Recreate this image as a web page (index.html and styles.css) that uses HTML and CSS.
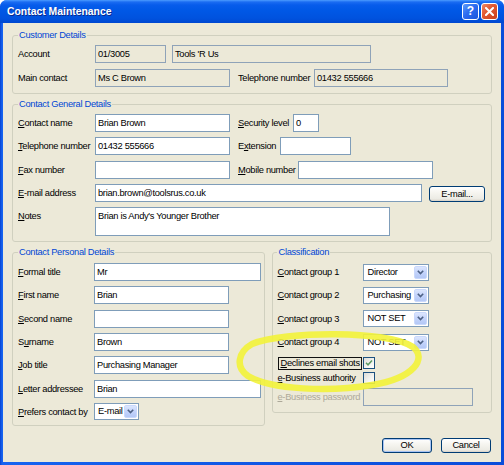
FILE: index.html
```html
<!DOCTYPE html>
<html>
<head>
<meta charset="utf-8">
<title>Contact Maintenance</title>
<link rel="stylesheet" href="styles.css">
</head>
<body>
<div class="window">
  <div class="titlebar">
    <span class="title">Contact Maintenance</span>
    <span class="tbtn help">?</span>
    <span class="tbtn close"><svg width="9" height="9" viewBox="0 0 9 9"><path d="M1 1L8 8M8 1L1 8" stroke="#fff" stroke-width="2" stroke-linecap="square"/></svg></span>
  </div>
  <div class="client">
    <fieldset class="group customer">
      <legend>Customer Details</legend>
      <div class="rows gap6">
        <div class="row">
          <span class="lbl w77">Account</span>
          <span class="box ro w71">01/3005</span>
          <span class="box ro w199 ml6">Tools 'R Us</span>
        </div>
        <div class="row">
          <span class="lbl w77">Main contact</span>
          <span class="box ro w135">Ms C Brown</span>
          <span class="lbl w76 ml8">Telephone number</span>
          <span class="box ro w134">01432 555666</span>
        </div>
      </div>
    </fieldset>

    <fieldset class="group general">
      <legend>Contact General Details</legend>
      <div class="rows gap53">
        <div class="row">
          <span class="lbl w77"><u>C</u>ontact name</span>
          <span class="box w135">Brian Brown</span>
          <span class="lbl w55 ml8"><u>S</u>ecurity level</span>
          <span class="box w26">0</span>
        </div>
        <div class="row">
          <span class="lbl w77"><u>T</u>elephone number</span>
          <span class="box w135">01432 555666</span>
          <span class="lbl w42 ml8">E<u>x</u>tension</span>
          <span class="box w71"></span>
        </div>
        <div class="row">
          <span class="lbl w77"><u>F</u>ax number</span>
          <span class="box w135"></span>
          <span class="lbl w60 ml8"><u>M</u>obile number</span>
          <span class="box w135"></span>
        </div>
        <div class="row">
          <span class="lbl w77"><u>E</u>-mail address</span>
          <span class="box w327">brian.brown@toolsrus.co.uk</span>
          <span class="btn email ml7">E-mail...</span>
        </div>
        <div class="row top">
          <span class="lbl w77 notes-lbl"><u>N</u>otes</span>
          <span class="box w295 notes">Brian is Andy's Younger Brother</span>
        </div>
      </div>
    </fieldset>

    <div class="lower">
      <fieldset class="group personal">
        <legend>Contact Personal Details</legend>
        <div class="rows gap53">
          <div class="row">
            <span class="lbl w76"><u>F</u>ormal title</span>
            <span class="box w167">Mr</span>
          </div>
          <div class="row">
            <span class="lbl w76"><u>F</u>irst name</span>
            <span class="box w135">Brian</span>
          </div>
          <div class="row">
            <span class="lbl w76"><u>S</u>econd name</span>
            <span class="box w135"></span>
          </div>
          <div class="row">
            <span class="lbl w76">S<u>u</u>rname</span>
            <span class="box w135">Brown</span>
          </div>
          <div class="row">
            <span class="lbl w76"><u>J</u>ob title</span>
            <span class="box w135">Purchasing Manager</span>
          </div>
          <div class="row">
            <span class="lbl w76"><u>L</u>etter addressee</span>
            <span class="box w167">Brian</span>
          </div>
          <div class="row">
            <span class="lbl w76"><u>P</u>refers contact by</span>
            <span class="combo w45"><span class="val">E-mail</span><span class="dd"><svg width="7" height="5" viewBox="0 0 7 5"><path d="M0.8 0.8L3.5 3.6L6.2 0.8" fill="none" stroke="#4D6185" stroke-width="1.6"/></svg></span></span>
          </div>
        </div>
      </fieldset>

      <fieldset class="group classif">
        <legend>Classification</legend>
        <div class="rows gap53">
          <div class="row">
            <span class="lbl w86"><u>C</u>ontact group 1</span>
            <span class="combo w66"><span class="val">Director</span><span class="dd"><svg width="7" height="5" viewBox="0 0 7 5"><path d="M0.8 0.8L3.5 3.6L6.2 0.8" fill="none" stroke="#4D6185" stroke-width="1.6"/></svg></span></span>
          </div>
          <div class="row">
            <span class="lbl w86"><u>C</u>ontact group 2</span>
            <span class="combo w66"><span class="val">Purchasing</span><span class="dd"><svg width="7" height="5" viewBox="0 0 7 5"><path d="M0.8 0.8L3.5 3.6L6.2 0.8" fill="none" stroke="#4D6185" stroke-width="1.6"/></svg></span></span>
          </div>
          <div class="row">
            <span class="lbl w86"><u>C</u>ontact group 3</span>
            <span class="combo w66"><span class="val">NOT SET</span><span class="dd"><svg width="7" height="5" viewBox="0 0 7 5"><path d="M0.8 0.8L3.5 3.6L6.2 0.8" fill="none" stroke="#4D6185" stroke-width="1.6"/></svg></span></span>
          </div>
          <div class="row">
            <span class="lbl w86"><u>C</u>ontact group 4</span>
            <span class="combo w66"><span class="val">NOT SET</span><span class="dd"><svg width="7" height="5" viewBox="0 0 7 5"><path d="M0.8 0.8L3.5 3.6L6.2 0.8" fill="none" stroke="#4D6185" stroke-width="1.6"/></svg></span></span>
          </div>
        </div>
        <div class="row chk-row first-chk">
          <span class="lbl w86"><span class="focus"><u>D</u>eclines email shots</span></span>
          <span class="check on"><svg width="8" height="8" viewBox="0 0 8 8"><path d="M1 3.8L3 5.8L7 1.5" fill="none" stroke="#5C9A62" stroke-width="1.5"/></svg></span>
        </div>
        <div class="row chk-row">
          <span class="lbl w86"><u>e</u>-Business authority</span>
          <span class="check"></span>
        </div>
        <div class="row pw-row">
          <span class="lbl w86 disabled"><u>e</u>-Business password</span>
          <span class="box ro w110"></span>
        </div>
      </fieldset>
    </div>

    <div class="buttons">
      <span class="btn default">OK</span>
      <span class="btn">Cancel</span>
    </div>
  </div>

  <svg class="highlight" width="504" height="465" viewBox="0 0 504 465">
    <path d="M252 344 C 285 331, 388 330, 413 347 C 427 358, 415 378, 372 385 C 330 392, 272 390, 248 376 C 235 367, 238 352, 252 344 Z" fill="none" stroke="#F3F33A" stroke-width="6.5" stroke-linecap="round" stroke-linejoin="round"/>
  </svg>
</div>
</body>
</html>
```

FILE: styles.css
```css
* { box-sizing: border-box; }
html, body { margin: 0; padding: 0; }
body {
  width: 504px;
  height: 465px;
  overflow: hidden;
  background: #ffffff;
  font-family: "Liberation Sans", Arial, sans-serif;
  font-size: 9.3px;
  letter-spacing: -0.3px;
  color: #000;
}
u { text-decoration: underline; text-underline-offset: 1px; }

.window {
  position: relative;
  width: 504px;
  height: 465px;
  display: flex;
  flex-direction: column;
  background: linear-gradient(to right, #0842D0 0, #1663F0 2px, #0A4DDA 100%);
  border-radius: 7px 7px 0 0;
  overflow: hidden;
}

.titlebar {
  flex: none;
  height: 23px;
  display: flex;
  align-items: center;
  padding: 0 6px 1px 7px;
  background: linear-gradient(to bottom, #4C9CFF 0, #1B6CF2 2px, #075CEB 5px, #0058E6 45%, #0052DE 80%, #0048D0 100%);
}
.title {
  flex: 1;
  color: #fff;
  font-weight: bold;
  font-size: 10.4px;
  letter-spacing: 0;
  text-shadow: 1px 1px 0 #0A2A8C;
}
.tbtn {
  width: 17px;
  height: 17px;
  border: 1px solid #fff;
  border-radius: 3px;
  display: flex;
  align-items: center;
  justify-content: center;
  color: #fff;
  font-weight: bold;
  font-size: 12px;
  letter-spacing: 0;
}
.tbtn.help {
  background: linear-gradient(135deg, #5E9BFA 0, #2D6CF0 45%, #1A54DC 100%);
  margin-right: 2px;
}
.tbtn.close {
  background: linear-gradient(135deg, #EE8A66 0, #E25A33 40%, #C8401D 100%);
}

.client {
  flex: 1;
  margin: 0 3px 3px;
  background: #ECE9D8;
  padding: 6px 9px 0;
  display: flex;
  flex-direction: column;
}

.group {
  margin: 0;
  border: 1px solid #D0D0BF;
  border-radius: 3px;
  min-width: 0;
}
.group legend {
  color: #0046D5;
  line-height: 12px;
  padding: 0 1px;
  margin-left: 0;
}
.customer { padding: 4px 0 6px 5px; }
.general { margin-top: 4px; padding: 4px 0 5px 5px; }
.lower {
  margin-top: 4px;
  display: flex;
  align-items: flex-start;
  gap: 7px;
}
.personal { width: 254px; padding: 5px 0 4px 5px; }
.classif { width: 220px; padding: 5px 0 6px 4px; }

.rows { display: flex; flex-direction: column; }
.gap6 { gap: 6px; }
.gap53 { gap: 5.3px; }

.row { display: flex; align-items: center; height: 18px; }
.row.top { align-items: flex-start; height: auto; }

.lbl { flex: none; line-height: 18px; white-space: nowrap; }
.lbl.disabled { color: #ACA899; }
.notes-lbl { line-height: 13px; padding-top: 3px; }

.box {
  flex: none;
  height: 18px;
  border: 1px solid #7F9DB9;
  background: #fff;
  padding: 0 2px;
  line-height: 16px;
  white-space: nowrap;
  overflow: hidden;
}
.box.ro { background: #ECE9D8; border-color: #8FA3B8; }
.box.notes { height: 29px; line-height: 14px; padding-top: 1px; }

.combo {
  flex: none;
  height: 17px;
  border: 1px solid #7F9DB9;
  background: #fff;
  display: flex;
  align-items: stretch;
  padding: 1px;
}
.combo .val { flex: 1; padding-left: 2px; line-height: 13px; white-space: nowrap; overflow: hidden; }
.combo .dd {
  flex: none;
  width: 13px;
  border-radius: 2px;
  background: linear-gradient(to bottom, #DCE6FD 0, #C3D3FB 50%, #B4C8F6 100%);
  border: 1px solid #C9D8FC;
  display: flex;
  align-items: center;
  justify-content: center;
}

.chk-row { height: 13px; }
.first-chk { margin-top: 5.2px; }
.chk-row + .chk-row { margin-top: 2px; }
.pw-row { margin-top: 4px; }

.focus {
  display: inline-block;
  border: 1px solid #111;
  line-height: 11px;
  padding: 0 1px;
  margin-left: 1px;
}
.check {
  flex: none;
  width: 12px;
  height: 12px;
  border: 1px solid #1C5180;
  background: linear-gradient(135deg, #DCDCD7 0, #F4F4F1 60%, #fff 100%);
  display: flex;
  align-items: center;
  justify-content: center;
}

.btn {
  flex: none;
  display: flex;
  align-items: center;
  justify-content: center;
  border: 1px solid #003C74;
  border-radius: 3px;
  background: linear-gradient(to bottom, #FFFFFF 0, #F6F5F0 40%, #ECEBE4 85%, #D6D0C5 100%);
}
.btn.email { width: 56px; height: 16px; margin-top: 2px; }

.buttons {
  margin-top: 12px;
  margin-right: 1px;
  display: flex;
  justify-content: flex-end;
  gap: 9px;
}
.buttons .btn { width: 50px; height: 15px; }
.btn.default { box-shadow: inset 0 0 0 1px #A8C4F3; }

.w26 { width: 26px; } .w42 { width: 42px; } .w45 { width: 45px; } .w55 { width: 55px; }
.w60 { width: 60px; } .w66 { width: 66px; } .w71 { width: 71px; } .w76 { width: 76px; }
.w77 { width: 77px; } .w86 { width: 86px; } .w110 { width: 110px; } .w134 { width: 134px; }
.w135 { width: 135px; } .w167 { width: 167px; } .w199 { width: 199px; } .w295 { width: 295px; }
.w327 { width: 327px; }
.ml6 { margin-left: 6px; } .ml7 { margin-left: 7px; } .ml8 { margin-left: 8px; }

.highlight {
  position: absolute;
  left: 0;
  top: 0;
  pointer-events: none;
  opacity: 0.9;
}
```
